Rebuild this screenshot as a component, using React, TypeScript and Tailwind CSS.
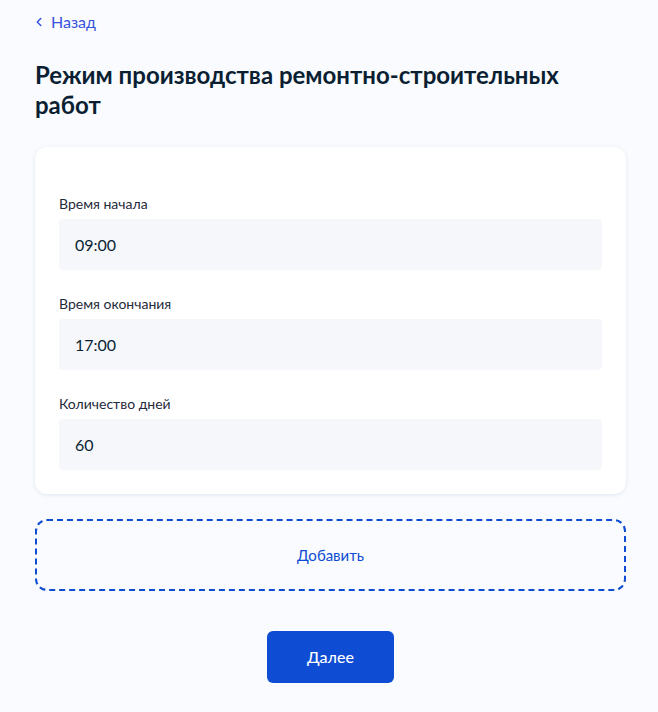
import { ChevronLeft } from 'lucide-react';

const fields = [
  { label: 'Время начала', value: '09:00' },
  { label: 'Время окончания', value: '17:00' },
  { label: 'Количество дней', value: '60' },
];

export default function App() {
  return (
    <div className="min-h-[712px] bg-[#f9fbfe] pl-[35px] pr-[32px] pt-[12px] font-['Lato','Noto_Sans',sans-serif] text-[#0b1f33]">
      {/* Back link */}
      <a href="#" className="flex h-[20px] items-center gap-[5px] text-[16px] text-[#3552dc]">
        <ChevronLeft className="h-[14px] w-[14px] -ml-[3px]" strokeWidth={2.5} />
        <span>Назад</span>
      </a>

      <h1 className="mt-[28px] text-[24px] font-bold leading-[30px]">
        Режим производства ремонтно-строительных работ
      </h1>

      {/* Fields card */}
      <div className="mt-[27px] rounded-[12px] bg-white px-[24px] pb-[24px] pt-[48px] shadow-[0_1px_4px_rgba(0,50,120,0.1)]">
        <div className="flex flex-col gap-[25px]">
          {fields.map((f) => (
            <div key={f.label}>
              <label className="block text-[14px] leading-[18px] text-[#1f2a3a] mb-[6px]">
                {f.label}
              </label>
              <div className="flex h-[51px] items-center rounded-[4px] bg-[#f5f7fa] px-[16px] text-[16px]">
                {f.value}
              </div>
            </div>
          ))}
        </div>
      </div>

      {/* Add block */}
      <button className="mt-[25px] flex h-[72px] w-full items-center justify-center rounded-[12px] border-2 border-dashed border-[#0d4cd3] text-[15px] text-[#0d4cd3]">
        Добавить
      </button>

      <div className="mt-[40px] flex justify-center">
        <button className="h-[52px] w-[127px] rounded-[6px] bg-[#0d4cd3] text-[16px] font-medium text-white">
          Далее
        </button>
      </div>
    </div>
  );
}
